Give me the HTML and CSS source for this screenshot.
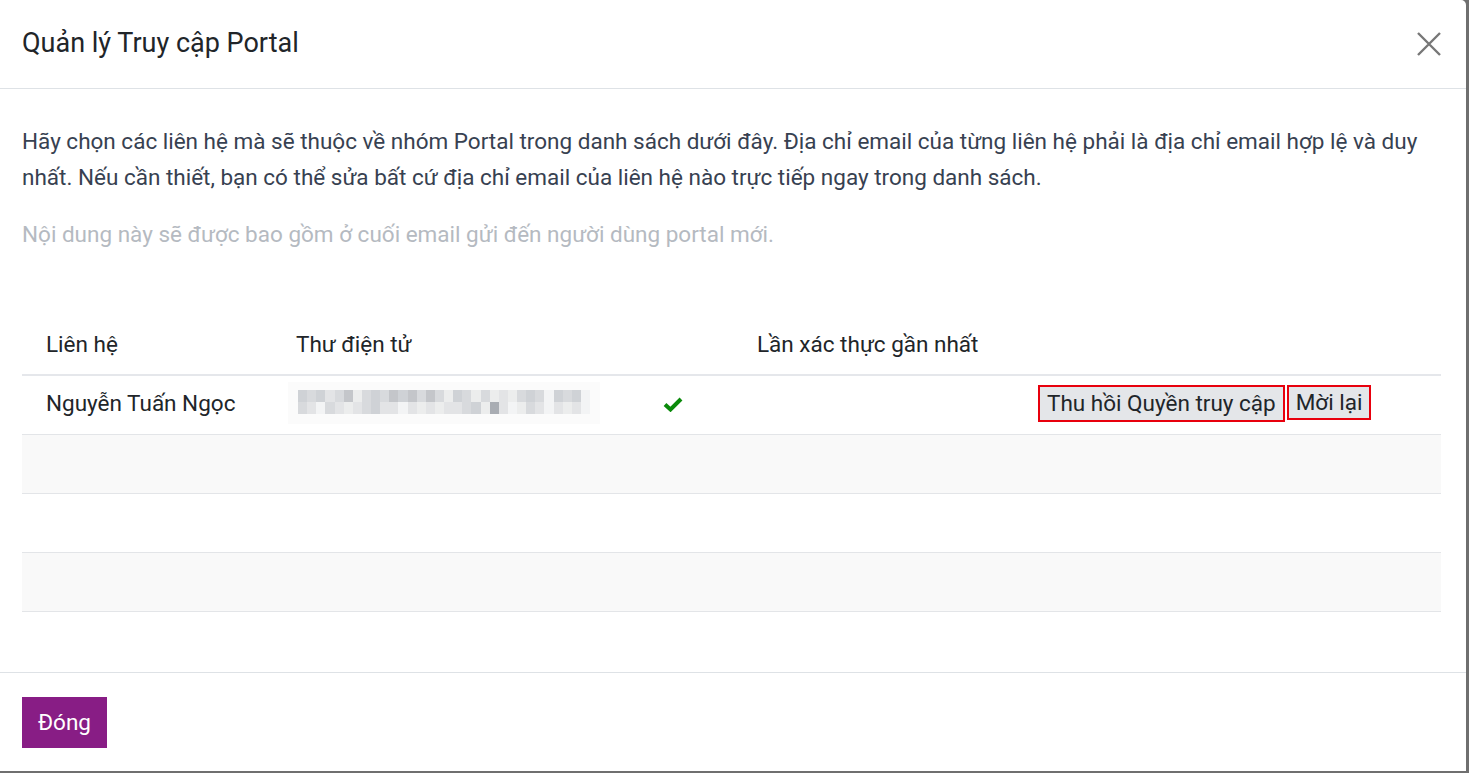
FILE: index.html
```html
<!DOCTYPE html>
<html lang="vi">
<head>
<meta charset="utf-8">
<title>Quản lý Truy cập Portal</title>
<link rel="stylesheet" href="styles.css">
</head>
<body>
<div class="backdrop">
  <div class="modal">
    <header class="modal-header">
      <h4 class="modal-title">Quản lý Truy cập Portal</h4>
      <button class="btn-close" aria-label="Đóng">
        <svg width="26" height="26" viewBox="0 0 26 26"><path d="M2 2 L24 24 M24 2 L2 24" stroke="#777" stroke-width="2.4" fill="none"/></svg>
      </button>
    </header>
    <main class="modal-body">
      <p class="intro">Hãy chọn các liên hệ mà sẽ thuộc về nhóm Portal trong danh sách dưới đây. Địa chỉ email của từng liên hệ phải là địa chỉ email hợp lệ và duy nhất. Nếu cần thiết, bạn có thể sửa bất cứ địa chỉ email của liên hệ nào trực tiếp ngay trong danh sách.</p>
      <p class="muted">Nội dung này sẽ được bao gồm ở cuối email gửi đến người dùng portal mới.</p>
      <table class="list">
        <colgroup>
          <col class="c-name"><col class="c-email"><col class="c-login"><col class="c-actions">
        </colgroup>
        <thead>
          <tr><th>Liên hệ</th><th>Thư điện tử</th><th>Lần xác thực gần nhất</th><th></th></tr>
        </thead>
        <tbody>
          <tr>
            <td>Nguyễn Tuấn Ngọc</td>
            <td class="email-cell">
              <div class="email">
                <div class="masked">
                  <span class="a"></span><span class="b"></span><span class="a"></span><span class="c"></span><span class="b"></span><span class="d"></span><span class="e"></span><span class="b"></span><span class="a"></span><span class="b"></span><span class="d"></span><span class="a"></span><span class="d"></span><span class="b"></span><span class="d"></span><span class="b"></span><span class="e"></span><span class="a"></span><span class="b"></span><span class="e"></span><span class="b"></span><span class="e"></span><span class="c"></span><span class="e"></span><span class="b"></span><span class="a"></span><span class="b"></span><span class="f"></span><span class="a"></span><span class="b"></span><span class="a"></span><span class="f"></span>
                  <span class="b"></span><span class="c"></span><span class="f"></span><span class="b"></span><span class="c"></span><span class="e"></span><span class="c"></span><span class="b"></span><span class="a"></span><span class="c"></span><span class="c"></span><span class="f"></span><span class="c"></span><span class="e"></span><span class="c"></span><span class="e"></span><span class="c"></span><span class="c"></span><span class="b"></span><span class="a"></span><span class="e"></span><span class="g"></span><span class="c"></span><span class="f"></span><span class="e"></span><span class="b"></span><span class="c"></span><span class="f"></span><span class="c"></span><span class="e"></span><span class="c"></span><span class="f"></span>
                </div>
                <svg class="check" width="20" height="16" viewBox="0 0 20 16"><path d="M2 8.5 L7.5 13.5 L18 3" stroke="#0b8a0b" stroke-width="4" fill="none" stroke-linejoin="miter"/></svg>
              </div>
            </td>
            <td></td>
            <td class="actions">
              <button class="btn-action">Thu hồi Quyền truy cập</button><button class="btn-action btn-small">Mời lại</button>
            </td>
          </tr>
          <tr class="empty"><td></td><td></td><td></td><td></td></tr>
          <tr class="empty"><td></td><td></td><td></td><td></td></tr>
          <tr class="empty"><td></td><td></td><td></td><td></td></tr>
        </tbody>
      </table>
    </main>
    <footer class="modal-footer">
      <button class="btn-primary">Đóng</button>
    </footer>
  </div>
</div>
</body>
</html>
```

FILE: styles.css
```css
* { box-sizing: border-box; }

html, body {
  margin: 0;
  height: 100%;
}

body {
  background: #6f6f6f;
  font-family: Roboto, "Noto Sans", "Liberation Sans", sans-serif;
  color: #212529;
}

.backdrop {
  height: 100%;
  padding: 0 3px 2px 0;
}

.modal {
  height: 100%;
  background: #fff;
  border-top-right-radius: 5px;
  display: flex;
  flex-direction: column;
}

.modal-header {
  height: 89px;
  border-bottom: 1px solid #dee2e6;
  display: flex;
  align-items: center;
  justify-content: space-between;
  padding: 0 24px 0 22px;
  flex-shrink: 0;
}

.modal-title {
  margin: 0;
  font-size: 27px;
  font-weight: 400;
  color: #212529;
  padding-bottom: 2px;
}

.btn-close {
  border: 0;
  background: none;
  padding: 0;
  width: 26px;
  height: 26px;
  cursor: pointer;
  display: flex;
}

.modal-body {
  flex: 1;
  padding: 34px 24px 0 22px;
}

.intro {
  margin: 0 0 21px;
  font-size: 22.5px;
  line-height: 36px;
  color: #374151;
  padding-right: 10px;
}

.muted {
  margin: 0;
  font-size: 22.5px;
  line-height: 36px;
  color: #b5bac1;
}

.list {
  margin-top: 63px;
  width: 1419px;
  border-collapse: collapse;
  table-layout: fixed;
  font-size: 22.5px;
  color: #212529;
}

.c-name { width: 250px; }
.c-email { width: 461px; }
.c-login { width: 281px; }
.c-actions { width: auto; }

.list th {
  text-align: left;
  font-weight: 400;
  height: 60px;
  padding: 0 24px 2px;
  border-bottom: 2px solid #e5e7eb;
  color: #212529;
}

.list td {
  height: 59px;
  padding: 0 24px 3px;
  border-bottom: 1px solid #e3e5e8;
}

.list tbody tr:nth-child(even) td {
  background: #f9f9f9;
}

.email-cell {
  padding-left: 16px !important;
}

.email {
  display: flex;
  align-items: center;
}

.masked {
  width: 312px;
  height: 42px;
  padding: 8px 10px 10px;
  background: #fbfbfb;
  display: grid;
  grid-template-columns: repeat(32, 1fr);
  grid-template-rows: 12px 12px;
}

.masked span { display: block; }
.masked .a { background: #cfd2d6; }
.masked .b { background: #d8dadd; }
.masked .c { background: #e3e4e6; }
.masked .d { background: #c4c6ca; }
.masked .e { background: #eceded; }
.masked .f { background: #f3f4f5; }
.masked .g { background: #a9adb3; }

.check {
  margin-left: 63px;
  margin-top: 2px;
}

.actions {
  padding-left: 24px !important;
  white-space: nowrap;
}

.btn-action {
  font-family: inherit;
  font-size: 22.5px;
  color: #212529;
  background: #e4e6e9;
  border: 2px solid #e8000d;
  padding: 2px 7px 2px;
  line-height: 29px;
  margin: 0;
  vertical-align: middle;
}

.btn-small {
  margin-left: 2px;
  padding: 1px 7px 1px;
  margin-top: -2px;
}

.modal-footer {
  height: 99px;
  border-top: 1px solid #dee2e6;
  padding: 24px 22px 0;
  flex-shrink: 0;
}

.btn-primary {
  font-family: inherit;
  font-size: 22.5px;
  color: #fff;
  background: #881d85;
  border: 0;
  width: 85px;
  height: 51px;
  padding: 0 0 2px;
}
```
